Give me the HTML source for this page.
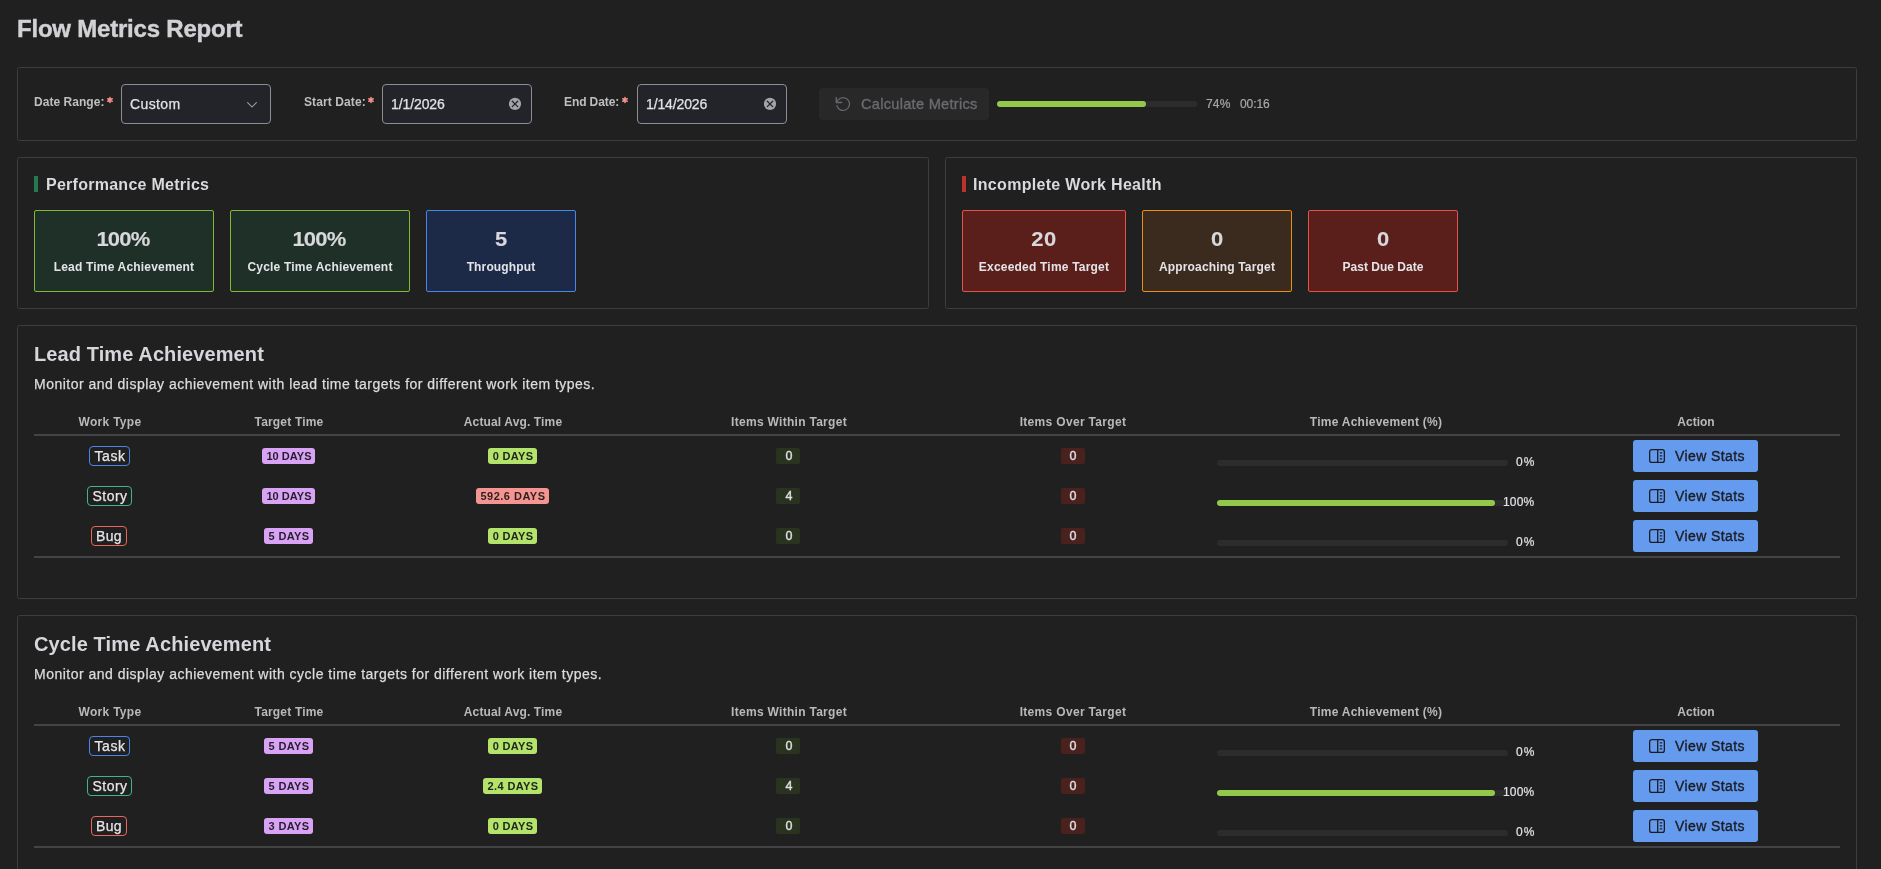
<!DOCTYPE html>
<html><head><meta charset="utf-8"><title>Flow Metrics Report</title>
<style>
html,body{margin:0;padding:0;}
body{background:#202020;width:1881px;height:869px;overflow:hidden;position:relative;font-family:"Liberation Sans",sans-serif;}
.b{position:absolute;display:block;}
.t{position:absolute;white-space:nowrap;line-height:1;will-change:transform;}
</style></head><body>
<div id="t1" class="t" style="left:16.70px;top:16.88px;font-size:24px;font-weight:700;color:#d2d2d6;letter-spacing:-0.209px;-webkit-text-stroke:0.4px #d2d2d6;"><span>Flow Metrics Report</span></div>
<div class="b" style="left:17px;top:67px;width:1840px;height:74px;border:1px solid #3d3d3f;border-radius:2.5px;box-sizing:border-box;"></div>
<div id="t2" class="t" style="left:34.00px;top:96.04px;font-size:12px;font-weight:700;color:#bfbfc2;letter-spacing:0.038px;"><span>Date Range:</span></div>
<div id="t3" class="t" style="left:303.60px;top:96.04px;font-size:12px;font-weight:700;color:#bfbfc2;letter-spacing:0.101px;"><span>Start Date:</span></div>
<div id="t4" class="t" style="left:564.20px;top:96.04px;font-size:12px;font-weight:700;color:#bfbfc2;letter-spacing:-0.101px;"><span>End Date:</span></div>
<svg class="b" style="left:105.60px;top:95.65px" width="8" height="8" viewBox="-4 -4 8 8"><path d="M0 -2.5 V2.5 M-2.17 -1.25 L2.17 1.25 M-2.17 1.25 L2.17 -1.25" stroke="#f5908c" stroke-width="1.55" stroke-linecap="round" fill="none"/></svg>
<svg class="b" style="left:366.65px;top:95.65px" width="8" height="8" viewBox="-4 -4 8 8"><path d="M0 -2.5 V2.5 M-2.17 -1.25 L2.17 1.25 M-2.17 1.25 L2.17 -1.25" stroke="#f5908c" stroke-width="1.55" stroke-linecap="round" fill="none"/></svg>
<svg class="b" style="left:621.45px;top:95.65px" width="8" height="8" viewBox="-4 -4 8 8"><path d="M0 -2.5 V2.5 M-2.17 -1.25 L2.17 1.25 M-2.17 1.25 L2.17 -1.25" stroke="#f5908c" stroke-width="1.55" stroke-linecap="round" fill="none"/></svg>
<div class="b" style="left:121px;top:84px;width:150px;height:40px;background:#23242a;border:1px solid #8c8d93;border-radius:4px;box-sizing:border-box;"></div>
<div class="b" style="left:382px;top:84px;width:150px;height:40px;background:#23242a;border:1px solid #8c8d93;border-radius:4px;box-sizing:border-box;"></div>
<div class="b" style="left:637px;top:84px;width:150px;height:40px;background:#23242a;border:1px solid #8c8d93;border-radius:4px;box-sizing:border-box;"></div>
<div id="t5" class="t" style="left:130.40px;top:97.25px;font-size:14px;font-weight:400;color:#e2e2e6;letter-spacing:0.393px;-webkit-text-stroke:0.25px #e2e2e6;"><span>Custom</span></div>
<div id="t6" class="t" style="left:390.60px;top:96.75px;font-size:14px;font-weight:400;color:#e2e2e6;letter-spacing:-0.100px;-webkit-text-stroke:0.25px #e2e2e6;"><span>1/1/2026</span></div>
<div id="t7" class="t" style="left:645.50px;top:96.75px;font-size:14px;font-weight:400;color:#e2e2e6;letter-spacing:-0.125px;-webkit-text-stroke:0.25px #e2e2e6;"><span>1/14/2026</span></div>
<svg class="b" style="left:244px;top:98px" width="16" height="14" viewBox="0 0 16 14"><path d="M3.6 4.6 L8 9 L12.4 4.6" fill="none" stroke="#a4a4a9" stroke-width="1.05" stroke-linecap="round" stroke-linejoin="round"/></svg>
<svg class="b" style="left:507px;top:96px" width="16" height="16" viewBox="0 0 16 16"><circle cx="8" cy="7.9" r="6.1" fill="#a3a4a9"/><path d="M5.3 5.2 L10.7 10.6 M10.7 5.2 L5.3 10.6" stroke="#23242a" stroke-width="1.3" stroke-linecap="round"/></svg>
<svg class="b" style="left:762px;top:96px" width="16" height="16" viewBox="0 0 16 16"><circle cx="8" cy="7.9" r="6.1" fill="#a3a4a9"/><path d="M5.3 5.2 L10.7 10.6 M10.7 5.2 L5.3 10.6" stroke="#23242a" stroke-width="1.3" stroke-linecap="round"/></svg>
<div class="b" style="left:819px;top:88px;width:170px;height:32px;background:#282828;border-radius:4px;"></div>
<svg class="b" style="left:833px;top:94px" width="20" height="20" viewBox="0 0 20 20"><path d="M3.3 3.6 V8.4 H8.6" fill="none" stroke="#66666c" stroke-width="1.45" stroke-linecap="round" stroke-linejoin="round"/><path d="M3.9 11.6 A6.4 6.4 0 1 0 5.2 5.9 L3.5 8.2" fill="none" stroke="#66666c" stroke-width="1.3" stroke-linecap="round" stroke-linejoin="round"/></svg>
<div id="t8" class="t" style="left:860.60px;top:96.54px;font-size:14.6px;font-weight:400;color:#6a6a70;letter-spacing:0.274px;-webkit-text-stroke:0.35px #6a6a70;"><span>Calculate Metrics</span></div>
<div class="b" style="left:997px;top:101px;width:200px;height:6px;background:#2c2c2f;border-radius:3px;"></div>
<div class="b" style="left:997px;top:101px;width:149px;height:6px;background:#92c94a;border-radius:3px;"></div>
<div id="t9" class="t" style="left:1205.80px;top:97.84px;font-size:12px;font-weight:400;color:#a8a8ad;letter-spacing:0.187px;-webkit-text-stroke:0.2px #a8a8ad;"><span>74%</span></div>
<div id="t10" class="t" style="left:1239.60px;top:97.84px;font-size:12px;font-weight:400;color:#a8a8ad;letter-spacing:-0.082px;-webkit-text-stroke:0.2px #a8a8ad;"><span>00:16</span></div>
<div class="b" style="left:17px;top:157px;width:912px;height:152px;border:1px solid #3d3d3f;border-radius:2.5px;box-sizing:border-box;"></div>
<div class="b" style="left:945px;top:157px;width:912px;height:152px;border:1px solid #3d3d3f;border-radius:2.5px;box-sizing:border-box;"></div>
<div class="b" style="left:34px;top:176px;width:4px;height:16px;background:#27794f;"></div>
<div class="b" style="left:962px;top:176px;width:4px;height:16px;background:#bd3229;"></div>
<div id="t11" class="t" style="left:46.20px;top:176.66px;font-size:16px;font-weight:700;color:#d9d9de;letter-spacing:0.262px;"><span>Performance Metrics</span></div>
<div id="t12" class="t" style="left:972.80px;top:176.66px;font-size:16px;font-weight:700;color:#d9d9de;letter-spacing:0.311px;"><span>Incomplete Work Health</span></div>
<div class="b" style="left:34px;top:210px;width:180px;height:82px;background:#1f3029;border:1px solid #7fb834;border-radius:2px;box-sizing:border-box;"></div>
<div id="t13" class="t" style="left:-77.05px;width:400px;text-align:center;top:228.97px;font-size:20px;font-weight:700;color:#d8d8dc;letter-spacing:-0.690px;-webkit-text-stroke:0.12px #d8d8dc;transform:scaleX(1.1);"><span>100%</span></div>
<div id="t14" class="t" style="left:-75.91px;width:400px;text-align:center;top:261.14px;font-size:12px;font-weight:700;color:#e4e4e8;letter-spacing:0.184px;"><span>Lead Time Achievement</span></div>
<div class="b" style="left:230px;top:210px;width:180px;height:82px;background:#1f3029;border:1px solid #7fb834;border-radius:2px;box-sizing:border-box;"></div>
<div id="t15" class="t" style="left:118.96px;width:400px;text-align:center;top:228.97px;font-size:20px;font-weight:700;color:#d8d8dc;letter-spacing:-0.690px;-webkit-text-stroke:0.12px #d8d8dc;transform:scaleX(1.1);"><span>100%</span></div>
<div id="t16" class="t" style="left:120.10px;width:400px;text-align:center;top:261.14px;font-size:12px;font-weight:700;color:#e4e4e8;letter-spacing:0.203px;"><span>Cycle Time Achievement</span></div>
<div class="b" style="left:426px;top:210px;width:150px;height:82px;background:#1d2a47;border:1px solid #4a86ea;border-radius:2px;box-sizing:border-box;"></div>
<div id="t17" class="t" style="left:301.00px;width:400px;text-align:center;top:228.97px;font-size:20px;font-weight:700;color:#d8d8dc;letter-spacing:0.000px;-webkit-text-stroke:0.12px #d8d8dc;transform:scaleX(1.1);"><span>5</span></div>
<div id="t18" class="t" style="left:301.07px;width:400px;text-align:center;top:261.14px;font-size:12px;font-weight:700;color:#e4e4e8;letter-spacing:0.142px;"><span>Throughput</span></div>
<div class="b" style="left:962px;top:210px;width:164px;height:82px;background:#5b1f1b;border:1px solid #e4524c;border-radius:2px;box-sizing:border-box;"></div>
<div id="t19" class="t" style="left:844.24px;width:400px;text-align:center;top:228.97px;font-size:20px;font-weight:700;color:#d8d8dc;letter-spacing:0.480px;-webkit-text-stroke:0.12px #d8d8dc;transform:scaleX(1.1);"><span>20</span></div>
<div id="t20" class="t" style="left:844.10px;width:400px;text-align:center;top:261.14px;font-size:12px;font-weight:700;color:#e4e4e8;letter-spacing:0.206px;"><span>Exceeded Time Target</span></div>
<div class="b" style="left:1142px;top:210px;width:150px;height:82px;background:#3b2b1f;border:1px solid #ee8d14;border-radius:2px;box-sizing:border-box;"></div>
<div id="t21" class="t" style="left:1017.00px;width:400px;text-align:center;top:228.97px;font-size:20px;font-weight:700;color:#d8d8dc;letter-spacing:0.000px;-webkit-text-stroke:0.12px #d8d8dc;transform:scaleX(1.1);"><span>0</span></div>
<div id="t22" class="t" style="left:1017.08px;width:400px;text-align:center;top:261.14px;font-size:12px;font-weight:700;color:#e4e4e8;letter-spacing:0.169px;"><span>Approaching Target</span></div>
<div class="b" style="left:1308px;top:210px;width:150px;height:82px;background:#5b1f1b;border:1px solid #e4524c;border-radius:2px;box-sizing:border-box;"></div>
<div id="t23" class="t" style="left:1183.00px;width:400px;text-align:center;top:228.97px;font-size:20px;font-weight:700;color:#d8d8dc;letter-spacing:0.000px;-webkit-text-stroke:0.12px #d8d8dc;transform:scaleX(1.1);"><span>0</span></div>
<div id="t24" class="t" style="left:1183.00px;width:400px;text-align:center;top:261.14px;font-size:12px;font-weight:700;color:#e4e4e8;letter-spacing:0.008px;"><span>Past Due Date</span></div>
<div class="b" style="left:17px;top:325px;width:1840px;height:274px;border:1px solid #3d3d3f;border-radius:2.5px;box-sizing:border-box;"></div>
<div id="t25" class="t" style="left:33.60px;top:344.07px;font-size:20px;font-weight:700;color:#d6d6db;letter-spacing:0.097px;"><span>Lead Time Achievement</span></div>
<div id="t26" class="t" style="left:34.00px;top:376.75px;font-size:14px;font-weight:400;color:#dcdce0;letter-spacing:0.481px;-webkit-text-stroke:0.25px #dcdce0;"><span>Monitor and display achievement with lead time targets for different work item types.</span></div>
<div id="t27" class="t" style="left:-90.35px;width:400px;text-align:center;top:416.14px;font-size:12px;font-weight:700;color:#b9b9bc;letter-spacing:0.295px;"><span>Work Type</span></div>
<div id="t28" class="t" style="left:88.79px;width:400px;text-align:center;top:416.14px;font-size:12px;font-weight:700;color:#b9b9bc;letter-spacing:0.188px;"><span>Target Time</span></div>
<div id="t29" class="t" style="left:312.57px;width:400px;text-align:center;top:416.14px;font-size:12px;font-weight:700;color:#b9b9bc;letter-spacing:0.136px;"><span>Actual Avg. Time</span></div>
<div id="t30" class="t" style="left:588.65px;width:400px;text-align:center;top:416.14px;font-size:12px;font-weight:700;color:#b9b9bc;letter-spacing:0.291px;"><span>Items Within Target</span></div>
<div id="t31" class="t" style="left:872.96px;width:400px;text-align:center;top:416.14px;font-size:12px;font-weight:700;color:#b9b9bc;letter-spacing:0.328px;"><span>Items Over Target</span></div>
<div id="t32" class="t" style="left:1176.43px;width:400px;text-align:center;top:416.14px;font-size:12px;font-weight:700;color:#b9b9bc;letter-spacing:0.254px;"><span>Time Achievement (%)</span></div>
<div id="t33" class="t" style="left:1495.51px;width:400px;text-align:center;top:416.14px;font-size:12px;font-weight:700;color:#b9b9bc;letter-spacing:0.012px;"><span>Action</span></div>
<div class="b" style="left:34px;top:434px;width:1806px;height:2px;background:#444446;"></div>
<div class="b" style="left:34px;top:556px;width:1806px;height:2px;background:#444446;"></div>
<div class="b" style="left:89px;top:445.8px;width:41px;height:20px;border:1px solid #4a86ea;border-radius:4px;box-sizing:border-box;"></div>
<div id="t34" class="t" style="left:-90.23px;width:400px;text-align:center;top:448.95px;font-size:14px;font-weight:400;color:#e6e6ea;letter-spacing:0.537px;-webkit-text-stroke:0.25px #e6e6ea;"><span>Task</span></div>
<div class="b" style="left:262px;top:448px;width:53px;height:16px;background:#d9a3f5;border-radius:3px;"></div>
<div id="t35" class="t" style="left:88.53px;width:400px;text-align:center;top:451.29px;font-size:11px;font-weight:700;color:#241e2b;letter-spacing:0.058px;"><span>10 DAYS</span></div>
<div class="b" style="left:488px;top:448px;width:49px;height:16px;background:#b4e36c;border-radius:3px;"></div>
<div id="t36" class="t" style="left:312.67px;width:400px;text-align:center;top:451.29px;font-size:11px;font-weight:700;color:#22261c;letter-spacing:0.333px;"><span>0 DAYS</span></div>
<div class="b" style="left:776px;top:448px;width:24px;height:16px;background:#2a331f;border-radius:2px;"></div>
<div id="t37" class="t" style="left:588.50px;width:400px;text-align:center;top:450.32px;font-size:12.5px;font-weight:400;color:#dedee2;letter-spacing:0.000px;-webkit-text-stroke:0.4px #dedee2;"><span>0</span></div>
<div class="b" style="left:1061px;top:448px;width:24px;height:16px;background:#4a211d;border-radius:2px;"></div>
<div id="t38" class="t" style="left:873.40px;width:400px;text-align:center;top:450.32px;font-size:12.5px;font-weight:400;color:#dedee2;letter-spacing:0.000px;-webkit-text-stroke:0.4px #dedee2;"><span>0</span></div>
<div class="b" style="left:1217px;top:460px;width:291px;height:6px;background:#2c2c2f;border-radius:3px;"></div>
<div id="t39" class="t" style="left:1515.90px;top:455.94px;font-size:12px;font-weight:400;color:#e2e2e6;letter-spacing:1.156px;-webkit-text-stroke:0.2px #e2e2e6;"><span>0%</span></div>
<div class="b" style="left:1633px;top:440px;width:125px;height:32px;background:#649bee;border-radius:3px;"></div>
<svg class="b" style="left:1647px;top:445.5px" width="20" height="20" viewBox="0 0 20 20"><rect x="2.65" y="3.65" width="14.7" height="12.7" rx="2.2" fill="none" stroke="#1c1c22" stroke-width="1.3"/><path d="M10.7 3.7 V16.3" stroke="#1c1c22" stroke-width="1.3"/><path d="M13.25 6.85 H14.75 M13.25 9.8 H14.75 M13.25 12.75 H14.75" stroke="#1c1c22" stroke-width="1.25" stroke-linecap="round"/></svg>
<div id="t40" class="t" style="left:1675.30px;top:448.95px;font-size:14px;font-weight:400;color:#1c1c22;letter-spacing:0.412px;-webkit-text-stroke:0.35px #1c1c22;"><span>View Stats</span></div>
<div class="b" style="left:87px;top:485.8px;width:45px;height:20px;border:1px solid #3cb888;border-radius:4px;box-sizing:border-box;"></div>
<div id="t41" class="t" style="left:-90.27px;width:400px;text-align:center;top:488.95px;font-size:14px;font-weight:400;color:#e6e6ea;letter-spacing:0.453px;-webkit-text-stroke:0.25px #e6e6ea;"><span>Story</span></div>
<div class="b" style="left:262px;top:488px;width:53px;height:16px;background:#d9a3f5;border-radius:3px;"></div>
<div id="t42" class="t" style="left:88.53px;width:400px;text-align:center;top:491.29px;font-size:11px;font-weight:700;color:#241e2b;letter-spacing:0.058px;"><span>10 DAYS</span></div>
<div class="b" style="left:476px;top:488px;width:73px;height:16px;background:#f59592;border-radius:3px;"></div>
<div id="t43" class="t" style="left:312.74px;width:400px;text-align:center;top:491.29px;font-size:11px;font-weight:700;color:#2c1f1f;letter-spacing:0.484px;"><span>592.6 DAYS</span></div>
<div class="b" style="left:776px;top:488px;width:24px;height:16px;background:#2a331f;border-radius:2px;"></div>
<div id="t44" class="t" style="left:588.50px;width:400px;text-align:center;top:490.32px;font-size:12.5px;font-weight:400;color:#dedee2;letter-spacing:0.000px;-webkit-text-stroke:0.4px #dedee2;"><span>4</span></div>
<div class="b" style="left:1061px;top:488px;width:24px;height:16px;background:#4a211d;border-radius:2px;"></div>
<div id="t45" class="t" style="left:873.40px;width:400px;text-align:center;top:490.32px;font-size:12.5px;font-weight:400;color:#dedee2;letter-spacing:0.000px;-webkit-text-stroke:0.4px #dedee2;"><span>0</span></div>
<div class="b" style="left:1217px;top:500px;width:291px;height:6px;background:#2c2c2f;border-radius:3px;"></div>
<div class="b" style="left:1217px;top:500px;width:278px;height:6px;background:#92c94a;border-radius:3px;"></div>
<div id="t46" class="t" style="left:1503.10px;top:495.94px;font-size:12px;font-weight:400;color:#e2e2e6;letter-spacing:0.199px;-webkit-text-stroke:0.2px #e2e2e6;"><span>100%</span></div>
<div class="b" style="left:1633px;top:480px;width:125px;height:32px;background:#649bee;border-radius:3px;"></div>
<svg class="b" style="left:1647px;top:485.5px" width="20" height="20" viewBox="0 0 20 20"><rect x="2.65" y="3.65" width="14.7" height="12.7" rx="2.2" fill="none" stroke="#1c1c22" stroke-width="1.3"/><path d="M10.7 3.7 V16.3" stroke="#1c1c22" stroke-width="1.3"/><path d="M13.25 6.85 H14.75 M13.25 9.8 H14.75 M13.25 12.75 H14.75" stroke="#1c1c22" stroke-width="1.25" stroke-linecap="round"/></svg>
<div id="t47" class="t" style="left:1675.30px;top:488.95px;font-size:14px;font-weight:400;color:#1c1c22;letter-spacing:0.412px;-webkit-text-stroke:0.35px #1c1c22;"><span>View Stats</span></div>
<div class="b" style="left:91px;top:525.8px;width:36px;height:20px;border:1px solid #e8665a;border-radius:4px;box-sizing:border-box;"></div>
<div id="t48" class="t" style="left:-90.83px;width:400px;text-align:center;top:528.95px;font-size:14px;font-weight:400;color:#e6e6ea;letter-spacing:0.338px;-webkit-text-stroke:0.25px #e6e6ea;"><span>Bug</span></div>
<div class="b" style="left:264px;top:528px;width:49px;height:16px;background:#d9a3f5;border-radius:3px;"></div>
<div id="t49" class="t" style="left:88.69px;width:400px;text-align:center;top:531.29px;font-size:11px;font-weight:700;color:#241e2b;letter-spacing:0.374px;"><span>5 DAYS</span></div>
<div class="b" style="left:488px;top:528px;width:49px;height:16px;background:#b4e36c;border-radius:3px;"></div>
<div id="t50" class="t" style="left:312.67px;width:400px;text-align:center;top:531.29px;font-size:11px;font-weight:700;color:#22261c;letter-spacing:0.333px;"><span>0 DAYS</span></div>
<div class="b" style="left:776px;top:528px;width:24px;height:16px;background:#2a331f;border-radius:2px;"></div>
<div id="t51" class="t" style="left:588.50px;width:400px;text-align:center;top:530.32px;font-size:12.5px;font-weight:400;color:#dedee2;letter-spacing:0.000px;-webkit-text-stroke:0.4px #dedee2;"><span>0</span></div>
<div class="b" style="left:1061px;top:528px;width:24px;height:16px;background:#4a211d;border-radius:2px;"></div>
<div id="t52" class="t" style="left:873.40px;width:400px;text-align:center;top:530.32px;font-size:12.5px;font-weight:400;color:#dedee2;letter-spacing:0.000px;-webkit-text-stroke:0.4px #dedee2;"><span>0</span></div>
<div class="b" style="left:1217px;top:540px;width:291px;height:6px;background:#2c2c2f;border-radius:3px;"></div>
<div id="t53" class="t" style="left:1515.90px;top:535.94px;font-size:12px;font-weight:400;color:#e2e2e6;letter-spacing:1.156px;-webkit-text-stroke:0.2px #e2e2e6;"><span>0%</span></div>
<div class="b" style="left:1633px;top:520px;width:125px;height:32px;background:#649bee;border-radius:3px;"></div>
<svg class="b" style="left:1647px;top:525.5px" width="20" height="20" viewBox="0 0 20 20"><rect x="2.65" y="3.65" width="14.7" height="12.7" rx="2.2" fill="none" stroke="#1c1c22" stroke-width="1.3"/><path d="M10.7 3.7 V16.3" stroke="#1c1c22" stroke-width="1.3"/><path d="M13.25 6.85 H14.75 M13.25 9.8 H14.75 M13.25 12.75 H14.75" stroke="#1c1c22" stroke-width="1.25" stroke-linecap="round"/></svg>
<div id="t54" class="t" style="left:1675.30px;top:528.95px;font-size:14px;font-weight:400;color:#1c1c22;letter-spacing:0.412px;-webkit-text-stroke:0.35px #1c1c22;"><span>View Stats</span></div>
<div class="b" style="left:17px;top:615px;width:1840px;height:274px;border:1px solid #3d3d3f;border-radius:2.5px;box-sizing:border-box;"></div>
<div id="t55" class="t" style="left:33.60px;top:634.07px;font-size:20px;font-weight:700;color:#d6d6db;letter-spacing:0.116px;"><span>Cycle Time Achievement</span></div>
<div id="t56" class="t" style="left:34.00px;top:666.75px;font-size:14px;font-weight:400;color:#dcdce0;letter-spacing:0.493px;-webkit-text-stroke:0.25px #dcdce0;"><span>Monitor and display achievement with cycle time targets for different work item types.</span></div>
<div id="t57" class="t" style="left:-90.35px;width:400px;text-align:center;top:706.14px;font-size:12px;font-weight:700;color:#b9b9bc;letter-spacing:0.295px;"><span>Work Type</span></div>
<div id="t58" class="t" style="left:88.79px;width:400px;text-align:center;top:706.14px;font-size:12px;font-weight:700;color:#b9b9bc;letter-spacing:0.188px;"><span>Target Time</span></div>
<div id="t59" class="t" style="left:312.57px;width:400px;text-align:center;top:706.14px;font-size:12px;font-weight:700;color:#b9b9bc;letter-spacing:0.136px;"><span>Actual Avg. Time</span></div>
<div id="t60" class="t" style="left:588.65px;width:400px;text-align:center;top:706.14px;font-size:12px;font-weight:700;color:#b9b9bc;letter-spacing:0.291px;"><span>Items Within Target</span></div>
<div id="t61" class="t" style="left:872.96px;width:400px;text-align:center;top:706.14px;font-size:12px;font-weight:700;color:#b9b9bc;letter-spacing:0.328px;"><span>Items Over Target</span></div>
<div id="t62" class="t" style="left:1176.43px;width:400px;text-align:center;top:706.14px;font-size:12px;font-weight:700;color:#b9b9bc;letter-spacing:0.254px;"><span>Time Achievement (%)</span></div>
<div id="t63" class="t" style="left:1495.51px;width:400px;text-align:center;top:706.14px;font-size:12px;font-weight:700;color:#b9b9bc;letter-spacing:0.012px;"><span>Action</span></div>
<div class="b" style="left:34px;top:724px;width:1806px;height:2px;background:#444446;"></div>
<div class="b" style="left:34px;top:846px;width:1806px;height:2px;background:#444446;"></div>
<div class="b" style="left:89px;top:735.8px;width:41px;height:20px;border:1px solid #4a86ea;border-radius:4px;box-sizing:border-box;"></div>
<div id="t64" class="t" style="left:-90.23px;width:400px;text-align:center;top:738.95px;font-size:14px;font-weight:400;color:#e6e6ea;letter-spacing:0.537px;-webkit-text-stroke:0.25px #e6e6ea;"><span>Task</span></div>
<div class="b" style="left:264px;top:738px;width:49px;height:16px;background:#d9a3f5;border-radius:3px;"></div>
<div id="t65" class="t" style="left:88.69px;width:400px;text-align:center;top:741.29px;font-size:11px;font-weight:700;color:#241e2b;letter-spacing:0.374px;"><span>5 DAYS</span></div>
<div class="b" style="left:488px;top:738px;width:49px;height:16px;background:#b4e36c;border-radius:3px;"></div>
<div id="t66" class="t" style="left:312.67px;width:400px;text-align:center;top:741.29px;font-size:11px;font-weight:700;color:#22261c;letter-spacing:0.333px;"><span>0 DAYS</span></div>
<div class="b" style="left:776px;top:738px;width:24px;height:16px;background:#2a331f;border-radius:2px;"></div>
<div id="t67" class="t" style="left:588.50px;width:400px;text-align:center;top:740.32px;font-size:12.5px;font-weight:400;color:#dedee2;letter-spacing:0.000px;-webkit-text-stroke:0.4px #dedee2;"><span>0</span></div>
<div class="b" style="left:1061px;top:738px;width:24px;height:16px;background:#4a211d;border-radius:2px;"></div>
<div id="t68" class="t" style="left:873.40px;width:400px;text-align:center;top:740.32px;font-size:12.5px;font-weight:400;color:#dedee2;letter-spacing:0.000px;-webkit-text-stroke:0.4px #dedee2;"><span>0</span></div>
<div class="b" style="left:1217px;top:750px;width:291px;height:6px;background:#2c2c2f;border-radius:3px;"></div>
<div id="t69" class="t" style="left:1515.90px;top:745.94px;font-size:12px;font-weight:400;color:#e2e2e6;letter-spacing:1.156px;-webkit-text-stroke:0.2px #e2e2e6;"><span>0%</span></div>
<div class="b" style="left:1633px;top:730px;width:125px;height:32px;background:#649bee;border-radius:3px;"></div>
<svg class="b" style="left:1647px;top:735.5px" width="20" height="20" viewBox="0 0 20 20"><rect x="2.65" y="3.65" width="14.7" height="12.7" rx="2.2" fill="none" stroke="#1c1c22" stroke-width="1.3"/><path d="M10.7 3.7 V16.3" stroke="#1c1c22" stroke-width="1.3"/><path d="M13.25 6.85 H14.75 M13.25 9.8 H14.75 M13.25 12.75 H14.75" stroke="#1c1c22" stroke-width="1.25" stroke-linecap="round"/></svg>
<div id="t70" class="t" style="left:1675.30px;top:738.95px;font-size:14px;font-weight:400;color:#1c1c22;letter-spacing:0.412px;-webkit-text-stroke:0.35px #1c1c22;"><span>View Stats</span></div>
<div class="b" style="left:87px;top:775.8px;width:45px;height:20px;border:1px solid #3cb888;border-radius:4px;box-sizing:border-box;"></div>
<div id="t71" class="t" style="left:-90.27px;width:400px;text-align:center;top:778.95px;font-size:14px;font-weight:400;color:#e6e6ea;letter-spacing:0.453px;-webkit-text-stroke:0.25px #e6e6ea;"><span>Story</span></div>
<div class="b" style="left:264px;top:778px;width:49px;height:16px;background:#d9a3f5;border-radius:3px;"></div>
<div id="t72" class="t" style="left:88.69px;width:400px;text-align:center;top:781.29px;font-size:11px;font-weight:700;color:#241e2b;letter-spacing:0.374px;"><span>5 DAYS</span></div>
<div class="b" style="left:483px;top:778px;width:59px;height:16px;background:#b4e36c;border-radius:3px;"></div>
<div id="t73" class="t" style="left:312.69px;width:400px;text-align:center;top:781.29px;font-size:11px;font-weight:700;color:#22261c;letter-spacing:0.370px;"><span>2.4 DAYS</span></div>
<div class="b" style="left:776px;top:778px;width:24px;height:16px;background:#2a331f;border-radius:2px;"></div>
<div id="t74" class="t" style="left:588.50px;width:400px;text-align:center;top:780.32px;font-size:12.5px;font-weight:400;color:#dedee2;letter-spacing:0.000px;-webkit-text-stroke:0.4px #dedee2;"><span>4</span></div>
<div class="b" style="left:1061px;top:778px;width:24px;height:16px;background:#4a211d;border-radius:2px;"></div>
<div id="t75" class="t" style="left:873.40px;width:400px;text-align:center;top:780.32px;font-size:12.5px;font-weight:400;color:#dedee2;letter-spacing:0.000px;-webkit-text-stroke:0.4px #dedee2;"><span>0</span></div>
<div class="b" style="left:1217px;top:790px;width:291px;height:6px;background:#2c2c2f;border-radius:3px;"></div>
<div class="b" style="left:1217px;top:790px;width:278px;height:6px;background:#92c94a;border-radius:3px;"></div>
<div id="t76" class="t" style="left:1503.10px;top:785.94px;font-size:12px;font-weight:400;color:#e2e2e6;letter-spacing:0.199px;-webkit-text-stroke:0.2px #e2e2e6;"><span>100%</span></div>
<div class="b" style="left:1633px;top:770px;width:125px;height:32px;background:#649bee;border-radius:3px;"></div>
<svg class="b" style="left:1647px;top:775.5px" width="20" height="20" viewBox="0 0 20 20"><rect x="2.65" y="3.65" width="14.7" height="12.7" rx="2.2" fill="none" stroke="#1c1c22" stroke-width="1.3"/><path d="M10.7 3.7 V16.3" stroke="#1c1c22" stroke-width="1.3"/><path d="M13.25 6.85 H14.75 M13.25 9.8 H14.75 M13.25 12.75 H14.75" stroke="#1c1c22" stroke-width="1.25" stroke-linecap="round"/></svg>
<div id="t77" class="t" style="left:1675.30px;top:778.95px;font-size:14px;font-weight:400;color:#1c1c22;letter-spacing:0.412px;-webkit-text-stroke:0.35px #1c1c22;"><span>View Stats</span></div>
<div class="b" style="left:91px;top:815.8px;width:36px;height:20px;border:1px solid #e8665a;border-radius:4px;box-sizing:border-box;"></div>
<div id="t78" class="t" style="left:-90.83px;width:400px;text-align:center;top:818.95px;font-size:14px;font-weight:400;color:#e6e6ea;letter-spacing:0.338px;-webkit-text-stroke:0.25px #e6e6ea;"><span>Bug</span></div>
<div class="b" style="left:264px;top:818px;width:49px;height:16px;background:#d9a3f5;border-radius:3px;"></div>
<div id="t79" class="t" style="left:88.69px;width:400px;text-align:center;top:821.29px;font-size:11px;font-weight:700;color:#241e2b;letter-spacing:0.374px;"><span>3 DAYS</span></div>
<div class="b" style="left:488px;top:818px;width:49px;height:16px;background:#b4e36c;border-radius:3px;"></div>
<div id="t80" class="t" style="left:312.67px;width:400px;text-align:center;top:821.29px;font-size:11px;font-weight:700;color:#22261c;letter-spacing:0.333px;"><span>0 DAYS</span></div>
<div class="b" style="left:776px;top:818px;width:24px;height:16px;background:#2a331f;border-radius:2px;"></div>
<div id="t81" class="t" style="left:588.50px;width:400px;text-align:center;top:820.32px;font-size:12.5px;font-weight:400;color:#dedee2;letter-spacing:0.000px;-webkit-text-stroke:0.4px #dedee2;"><span>0</span></div>
<div class="b" style="left:1061px;top:818px;width:24px;height:16px;background:#4a211d;border-radius:2px;"></div>
<div id="t82" class="t" style="left:873.40px;width:400px;text-align:center;top:820.32px;font-size:12.5px;font-weight:400;color:#dedee2;letter-spacing:0.000px;-webkit-text-stroke:0.4px #dedee2;"><span>0</span></div>
<div class="b" style="left:1217px;top:830px;width:291px;height:6px;background:#2c2c2f;border-radius:3px;"></div>
<div id="t83" class="t" style="left:1515.90px;top:825.94px;font-size:12px;font-weight:400;color:#e2e2e6;letter-spacing:1.156px;-webkit-text-stroke:0.2px #e2e2e6;"><span>0%</span></div>
<div class="b" style="left:1633px;top:810px;width:125px;height:32px;background:#649bee;border-radius:3px;"></div>
<svg class="b" style="left:1647px;top:815.5px" width="20" height="20" viewBox="0 0 20 20"><rect x="2.65" y="3.65" width="14.7" height="12.7" rx="2.2" fill="none" stroke="#1c1c22" stroke-width="1.3"/><path d="M10.7 3.7 V16.3" stroke="#1c1c22" stroke-width="1.3"/><path d="M13.25 6.85 H14.75 M13.25 9.8 H14.75 M13.25 12.75 H14.75" stroke="#1c1c22" stroke-width="1.25" stroke-linecap="round"/></svg>
<div id="t84" class="t" style="left:1675.30px;top:818.95px;font-size:14px;font-weight:400;color:#1c1c22;letter-spacing:0.412px;-webkit-text-stroke:0.35px #1c1c22;"><span>View Stats</span></div>
</body></html>
